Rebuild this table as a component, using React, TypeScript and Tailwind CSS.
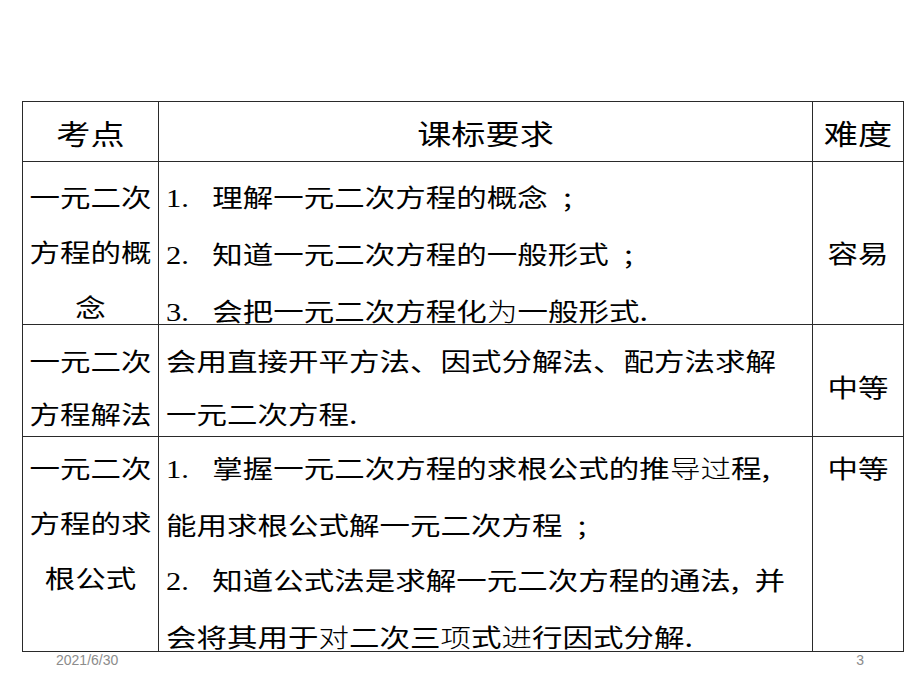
import React from "react";

const cjk = { fontFamily: '"Noto Sans CJK SC", "Noto Sans", sans-serif' };

// thin glyphs that PowerPoint drew from a fallback face
const L = ({ children }: { children: React.ReactNode }) => (
  <span className="font-light">{children}</span>
);

// "1." numbering in a Times-like face, with the gap before the text
const Num = ({ n }: { n: string }) => (
  <span
    className="inline-block w-[38px]"
    style={{ fontFamily: '"Liberation Serif", serif' }}
  >
    {n}.
  </span>
);

const Line = ({ children }: { children: React.ReactNode }) => (
  <div className="whitespace-nowrap">{children}</div>
);

const edge = "border-r border-b border-[#2a2a2a] overflow-visible";

export default function App() {
  return (
    <div className="w-[920px] h-[690px] bg-white pt-[101px] pl-[22px] text-black" style={cjk}>
      <div className="grid w-[882px] grid-cols-[136px_654px_91px] grid-rows-[60px_163px_112px_215px] border-l border-t border-[#2a2a2a] font-normal">
        {/* header */}
        <div className={`${edge} pt-[2px]`}>
          <div className="scale-x-[1.22] text-center text-[28px] leading-[58px]">考点</div>
        </div>
        <div className={`${edge} pt-[2px]`}>
          <div className="scale-x-[1.22] text-center text-[28px] leading-[58px]">课标要求</div>
        </div>
        <div className={`${edge} pt-[2px]`}>
          <div className="scale-x-[1.22] text-center text-[28px] leading-[58px]">难度</div>
        </div>

        {/* 概念 */}
        <div className={`${edge} pt-[7px]`}>
          <div className="scale-x-[1.22] text-center text-[25px] leading-[55px]">
            <Line>一元二次</Line>
            <Line>方程的概</Line>
            <Line>念</Line>
          </div>
        </div>
        <div className={`${edge} pt-[7px] pl-[7px]`}>
          <div className="origin-left scale-x-[1.22] text-[25px] leading-[55px]">
            <Line>
              <Num n="1" />理解一元二次方程的概念{"\u2002"};
            </Line>
            <Line>
              <Num n="2" />知道一元二次方程的一般形式{"\u2002"};
            </Line>
            <Line>
              <Num n="3" />会把一元二次方程化<L>为</L>一般形式.
            </Line>
          </div>
        </div>
        <div className={`${edge} pt-[63px]`}>
          <div className="scale-x-[1.22] text-center text-[25px] leading-[55px]">容易</div>
        </div>

        {/* 解法 */}
        <div className={`${edge} pt-[9px]`}>
          <div className="scale-x-[1.22] text-center text-[25px] leading-[53px]">
            <Line>一元二次</Line>
            <Line>方程解法</Line>
          </div>
        </div>
        <div className={`${edge} pt-[9px] pl-[7px]`}>
          <div className="origin-left scale-x-[1.22] text-[25px] leading-[53px]">
            <Line>会用直接开平方法、因式分解法、配方法求解</Line>
            <Line>一元二次方程.</Line>
          </div>
        </div>
        <div className={`${edge} pt-[34px]`}>
          <div className="scale-x-[1.22] text-center text-[25px] leading-[54px]">中等</div>
        </div>

        {/* 求根公式 */}
        <div className={`${edge} pt-[3px]`}>
          <div className="scale-x-[1.22] text-center text-[25px] leading-[55px]">
            <Line>一元二次</Line>
            <Line>方程的求</Line>
            <Line>根公式</Line>
          </div>
        </div>
        <div className={`${edge} pt-[3px] pl-[7px]`}>
          <div className="origin-left scale-x-[1.22] text-[25px] leading-[55px]">
            <Line>
              <Num n="1" />掌握一元二次方程的求根公式的推<L>导</L><L>过</L>程,
            </Line>
            <Line>能用求根公式解一元二次方程{"\u2002"};</Line>
            <Line>
              <Num n="2" />知道公式法是求解一元二次方程的通法,{"\u2002"}并
            </Line>
            <Line>
              会将其用于<L>对</L>二次三<L>项</L>式<L>进</L>行因式分解.
            </Line>
          </div>
        </div>
        <div className={`${edge} pt-[3px]`}>
          <div className="scale-x-[1.22] text-center text-[25px] leading-[55px]">中等</div>
        </div>
      </div>

      <div
        className="flex w-[882px] text-[14px] leading-[16px] text-[#8c8c8c]"
        style={{ fontFamily: '"Liberation Sans", sans-serif' }}
      >
        <span className="ml-[34px]">2021/6/30</span>
        <span className="ml-auto mr-[40px]">3</span>
      </div>
    </div>
  );
}
